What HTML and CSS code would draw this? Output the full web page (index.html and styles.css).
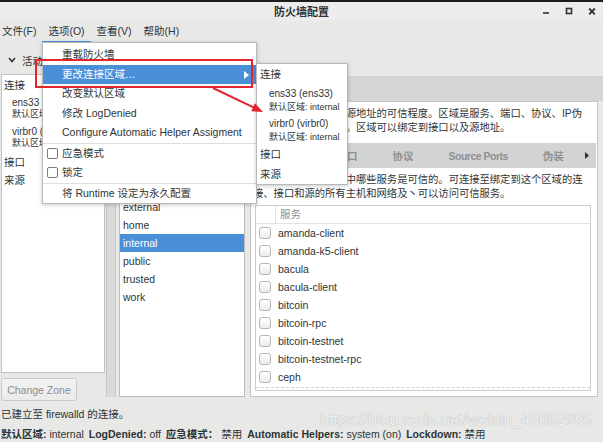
FILE: index.html
```html
<!DOCTYPE html>
<html lang="zh-CN">

<head>
  <meta charset="UTF-8">
  <meta name="viewport" content="width=device-width, initial-scale=1.0">
  <title>防火墙配置</title>
  <link rel="stylesheet" href="styles.css">
</head>

<body>
  <div class="window">

    <div class="titlebar">
      <span class="title">防火墙配置</span>
      <div class="win-buttons">
        <svg width="12" height="12" viewBox="0 0 12 12"><rect x="3" y="7.2" width="6" height="1.6" fill="#2e3436"/></svg>
        <svg width="12" height="12" viewBox="0 0 12 12"><rect x="3.5" y="3.5" width="5" height="5" fill="none" stroke="#2e3436" stroke-width="1.6"/></svg>
        <svg width="12" height="12" viewBox="0 0 12 12"><path d="M3.2 3.5 L8.8 9.3 M8.8 3.5 L3.2 9.3" stroke="#2e3436" stroke-width="1.8"/></svg>
      </div>
    </div>

    <div class="menubar">
      <span class="menu-title">文件(F)</span>
      <span class="menu-title open">选项(O)</span>
      <span class="menu-title">查看(V)</span>
      <span class="menu-title">帮助(H)</span>
    </div>

    <div class="main">
      <div class="bindings">
        <div class="bindings-head">
          <svg width="8" height="6" viewBox="0 0 8 6"><polyline points="1,1 4,4.5 7,1" fill="none" stroke="#2e3436" stroke-width="1.5"/></svg>
          <span>活动绑定</span>
        </div>
        <div class="bindings-list">
          <div class="bind-group">连接</div>
          <div class="bind-item">
            <div class="bind-name">ens33 (ens33)</div>
            <div class="bind-zone">默认区域: internal</div>
          </div>
          <div class="bind-item">
            <div class="bind-name">virbr0 (virbr0)</div>
            <div class="bind-zone">默认区域: internal</div>
          </div>
          <div class="bind-group short">接口</div>
          <div class="bind-group short">来源</div>
        </div>
        <button class="change-zone">Change Zone</button>
      </div>

      <div class="config">
        <div class="config-head">
          <span>配置：</span>
          <span class="combo">运行时</span>
        </div>
        <div class="top-tabs">
          <span class="top-tab">区域</span>
          <span class="top-tab">服务</span>
          <span class="top-tab">IPSets</span>
        </div>
        <div class="zone-page">
          <div class="pane-sep"></div>
          <div class="zone-col">
            <div class="zone-label">区域</div>
            <div class="zone-list">
              <div class="zone">block</div>
              <div class="zone">dmz</div>
              <div class="zone">drop</div>
              <div class="zone">external</div>
              <div class="zone">home</div>
              <div class="zone selected">internal</div>
              <div class="zone">public</div>
              <div class="zone">trusted</div>
              <div class="zone">work</div>
            </div>
          </div>

          <div class="zone-detail">
            <div class="desc">
              网络连接、接口以及源地址的可信程度。区域是服务、端口、协议、IP伪<br>
              装、端口转发的组合。区域可以绑定到接口以及源地址。
            </div>
            <div class="tabs">
              <span class="tab">服务</span>
              <span class="tab">端口</span>
              <span class="tab">协议</span>
              <span class="tab narrow">Source Ports</span>
              <span class="tab">伪装</span>
              <svg class="tab-arrow" width="4" height="7" viewBox="0 0 4 7"><polygon points="0,0 4,3.5 0,7" fill="#2e3436"/></svg>
            </div>
            <div class="svc-desc">
              可以在这里定义区域中哪些服务是可信的。可连接至绑定到这个区域的连<br>
              接、接口和源的所有主机和网络及丶可以访问可信服务。
            </div>
            <div class="svc-table">
              <div class="svc-head">
                <span class="svc-head-check"></span>
                <span class="svc-head-name">服务</span>
              </div>
              <div class="svc-row"><span class="check"></span>amanda-client</div>
              <div class="svc-row"><span class="check"></span>amanda-k5-client</div>
              <div class="svc-row"><span class="check"></span>bacula</div>
              <div class="svc-row"><span class="check"></span>bacula-client</div>
              <div class="svc-row"><span class="check"></span>bitcoin</div>
              <div class="svc-row"><span class="check"></span>bitcoin-rpc</div>
              <div class="svc-row"><span class="check"></span>bitcoin-testnet</div>
              <div class="svc-row"><span class="check"></span>bitcoin-testnet-rpc</div>
              <div class="svc-row"><span class="check"></span>ceph</div>
              <div class="overshoot"></div>
            </div>
          </div>
        </div>
      </div>
    </div>

    <div class="statusbar">
      <div>已建立至 firewalld 的连接。</div>
      <div>
        <span class="stat"><b>默认区域:</b> internal</span>
        <span class="stat"><b>LogDenied:</b> off</span>
        <span class="stat"><b>应急模式：</b> 禁用</span>
        <span class="stat"><b>Automatic Helpers:</b> system (on)</span>
        <span class="stat"><b>Lockdown:</b> 禁用</span>
      </div>
      <div class="watermark">https://blog.csdn.net/weixin_45682995</div>
    </div>

    <!-- options menu, opened -->
    <div class="popup menu-options">
      <div class="mi">重载防火墙</div>
      <div class="mi active">更改连接区域…
        <svg class="sub-arrow" width="5" height="8" viewBox="0 0 5 8"><polygon points="0,0 5,4 0,8" fill="#fff"/></svg>
      </div>
      <div class="mi">改变默认区域</div>
      <div class="mi">修改 LogDenied</div>
      <div class="mi">Configure Automatic Helper Assigment</div>
      <div class="sep"></div>
      <div class="mi check-item"><span class="menu-check"></span>应急模式</div>
      <div class="mi check-item"><span class="menu-check"></span>锁定</div>
      <div class="sep"></div>
      <div class="mi">将 Runtime 设定为永久配置</div>
    </div>

    <div class="popup menu-zones">
      <div class="zi-head">连接</div>
      <div class="zi-bind">
        <div class="zi-name">ens33 (ens33)</div>
        <div class="zi-zone">默认区域: internal</div>
      </div>
      <div class="zi-bind">
        <div class="zi-name">virbr0 (virbr0)</div>
        <div class="zi-zone">默认区域: internal</div>
      </div>
      <div class="zi-row">接口</div>
      <div class="zi-row">来源</div>
    </div>

    <!-- red annotation -->
    <svg class="annotation" width="603" height="442" viewBox="0 0 603 442">
      <rect x="36" y="60" width="216" height="27" fill="none" stroke="#e3262b" stroke-width="2"/>
      <line x1="213" y1="88" x2="254" y2="107.7" stroke="#e3262b" stroke-width="2"/>
      <polygon points="263,112 255,103.2 251.2,111.3" fill="#e3262b"/>
    </svg>

  </div>
</body>

</html>
```

FILE: styles.css
```css
* {
  box-sizing: border-box;
}

body {
  margin: 0;
  font-family: "Liberation Sans", "Noto Sans CJK SC", sans-serif;
  font-size: 10.5px;
  color: #2e3436;
}

.window {
  position: relative;
  width: 603px;
  height: 442px;
  overflow: hidden;
  background: #e8e8e7;
}

/* title + menu */

.titlebar {
  height: 21px;
  border-top: 2px solid #1c1c1c;
  padding-bottom: 2px;
  display: grid;
  grid-template-columns: 1fr auto 1fr;
  align-items: center;
  background: #ececec;
}

.title {
  grid-column: 2;
  font-size: 11px;
  font-weight: bold;
}

.win-buttons {
  justify-self: end;
  display: flex;
  gap: 11px;
  padding-right: 5px;
}

.win-buttons svg {
  display: block;
}

.menubar {
  height: 22px;
  display: flex;
  background: #e8e8e7;
}

.menu-title {
  padding: 0 6px;
  line-height: 20px;
  border-bottom: 2px solid transparent;
}

.menu-title:first-child {
  padding-left: 2px;
}

.menu-title.open {
  border-bottom-color: #4a90d9;
}

/* main area */

.main {
  height: 360px;
  display: flex;
}

.bindings {
  width: 106px;
  display: flex;
  flex-direction: column;
}

.bindings-head {
  height: 31px;
  display: flex;
  align-items: center;
  gap: 6px;
  padding: 3px 0 0 8px;
}

.bindings-list {
  height: 299px;
  width: 104px;
  margin-left: 1px;
  padding-top: 1px;
  background: #fff;
  border: 1px solid #c4c4c4;
}

.bind-group {
  line-height: 19px;
  padding-left: 2px;
}

.bind-group.short {
  line-height: 18px;
}

.bind-item {
  padding: 2px 0 4px 10px;
}

.bind-name {
  font-size: 10px;
  line-height: 12px;
}

.bind-zone {
  font-size: 9px;
  line-height: 11px;
}

.change-zone {
  margin: 5px 0 0 1px;
  width: 76px;
  height: 23px;
  padding: 0;
  border: 1px solid #c9c9c9;
  border-radius: 3px;
  background: linear-gradient(#f3f3f3, #ebebeb);
  color: #8b8e8f;
  font-family: inherit;
  font-size: 10.5px;
}

.config {
  flex: 1;
  display: flex;
  flex-direction: column;
}

.config-head {
  height: 33px;
  display: flex;
  align-items: center;
  gap: 6px;
  padding-left: 12px;
}

.combo {
  border: 1px solid #c4c4c4;
  border-radius: 3px;
  padding: 3px 30px 3px 6px;
  background: #f4f4f4;
}

.top-tabs {
  height: 25px;
  display: flex;
  padding-left: 4px;
  background: #d5d5d5;
}

.top-tab {
  line-height: 25px;
  padding: 0 10px;
  font-weight: bold;
  color: #8b8e8f;
}

.zone-page {
  flex: 1;
  display: flex;
  padding-bottom: 6px;
}

.pane-sep {
  width: 10px;
  margin-right: 3px;
  background: #dadada;
  border-left: 1px solid #c4c4c4;
  border-right: 1px solid #c9c9c9;
}

.zone-col {
  width: 126px;
  margin-right: 5px;
  display: flex;
  flex-direction: column;
}

.zone-label {
  height: 42px;
  padding: 14px 0 0 4px;
}

.zone-list {
  flex: 1;
  background: #fff;
  border: 1px solid #bdbdbd;
}

.zone {
  height: 18px;
  line-height: 18px;
  padding-left: 3px;
}

.zone.selected {
  background: #4a90d9;
  color: #fff;
}

.zone-detail {
  flex: 1;
  margin-right: 5px;
  display: flex;
  flex-direction: column;
  background: #fff;
  border: 1px solid #c4c4c4;
}

.desc,
.svc-desc {
  font-size: 10.3px;
  line-height: 14px;
  white-space: nowrap;
  overflow: hidden;
}

.desc {
  padding: 5px 2px 8px;
}

.svc-desc {
  padding: 5px 2px 4px;
}

.tabs {
  height: 25px;
  margin: 0 1px 0 2px;
  padding: 0 7px 0 10px;
  display: flex;
  align-items: center;
  background: #d3d3d3;
  font-weight: bold;
  color: #8e9192;
}

.tab {
  padding: 0 17.5px;
}

.tab.narrow {
  letter-spacing: -0.5px;
}

.tab-arrow {
  margin-left: auto;
}

.svc-table {
  flex: 1;
  margin: 0 6px 5px 4px;
  display: flex;
  flex-direction: column;
  border: 1px solid #cdcdcd;
  overflow: hidden;
}

.svc-head {
  height: 18px;
  display: flex;
  border-bottom: 1px solid #e2e2e2;
  color: #8b8e8f;
}

.svc-head-check {
  width: 20px;
  border-right: 1px solid #e2e2e2;
}

.svc-head-name {
  padding-left: 4px;
  line-height: 17px;
}

.svc-row {
  height: 18px;
  display: flex;
  align-items: center;
  gap: 7px;
  padding-left: 3px;
}

.check {
  width: 12px;
  height: 12px;
  border: 1px solid #b6b6b3;
  border-radius: 3px;
  background: linear-gradient(#ffffff, #ececec);
}

.overshoot {
  margin-top: auto;
  height: 3px;
  border-top: 1px dashed #d0d0d0;
}

/* status bar */

.statusbar {
  position: relative;
  height: 39px;
  padding: 1px 0 0 1px;
  line-height: 20px;
}

.stat {
  margin-right: 2px;
}

.watermark {
  position: absolute;
  left: 320px;
  top: 9px;
  font-size: 16px;
  line-height: 16px;
  color: rgba(255, 255, 255, 0.85);
  text-shadow: 0 0 1px rgba(0, 0, 0, 0.35);
  white-space: nowrap;
}

/* popup menus */

.popup {
  position: absolute;
  background: #fff;
  border: 1px solid #b9b9b9;
  box-shadow: 0 1px 4px rgba(0, 0, 0, 0.22);
}

.menu-options {
  left: 42px;
  top: 42px;
  width: 215px;
  height: 162px;
  padding-top: 2px;
}

.mi {
  position: relative;
  height: 19.5px;
  line-height: 19.5px;
  padding-left: 19px;
  white-space: nowrap;
}

.mi.active {
  background: #4a90d9;
  color: #fff;
}

.sub-arrow {
  position: absolute;
  right: 7px;
  top: 6px;
}

.mi.check-item {
  display: flex;
  align-items: center;
  gap: 4px;
  padding-left: 4px;
}

.menu-check {
  width: 11px;
  height: 11px;
  border: 1px solid #7c7c7c;
  border-radius: 2px;
}

.sep {
  height: 1px;
  background: #dedede;
}

.menu-zones {
  left: 256px;
  top: 63px;
  width: 92px;
  height: 122px;
  padding-top: 1px;
}

.zi-head {
  line-height: 19px;
  padding-left: 3px;
}

.zi-bind {
  padding: 3px 0 1px 12px;
}

.zi-name {
  font-size: 10px;
  line-height: 14px;
}

.zi-zone {
  font-size: 9px;
  line-height: 12px;
}

.zi-row {
  line-height: 20px;
  padding-left: 3px;
}

.annotation {
  position: absolute;
  left: 0;
  top: 0;
  pointer-events: none;
}
```
